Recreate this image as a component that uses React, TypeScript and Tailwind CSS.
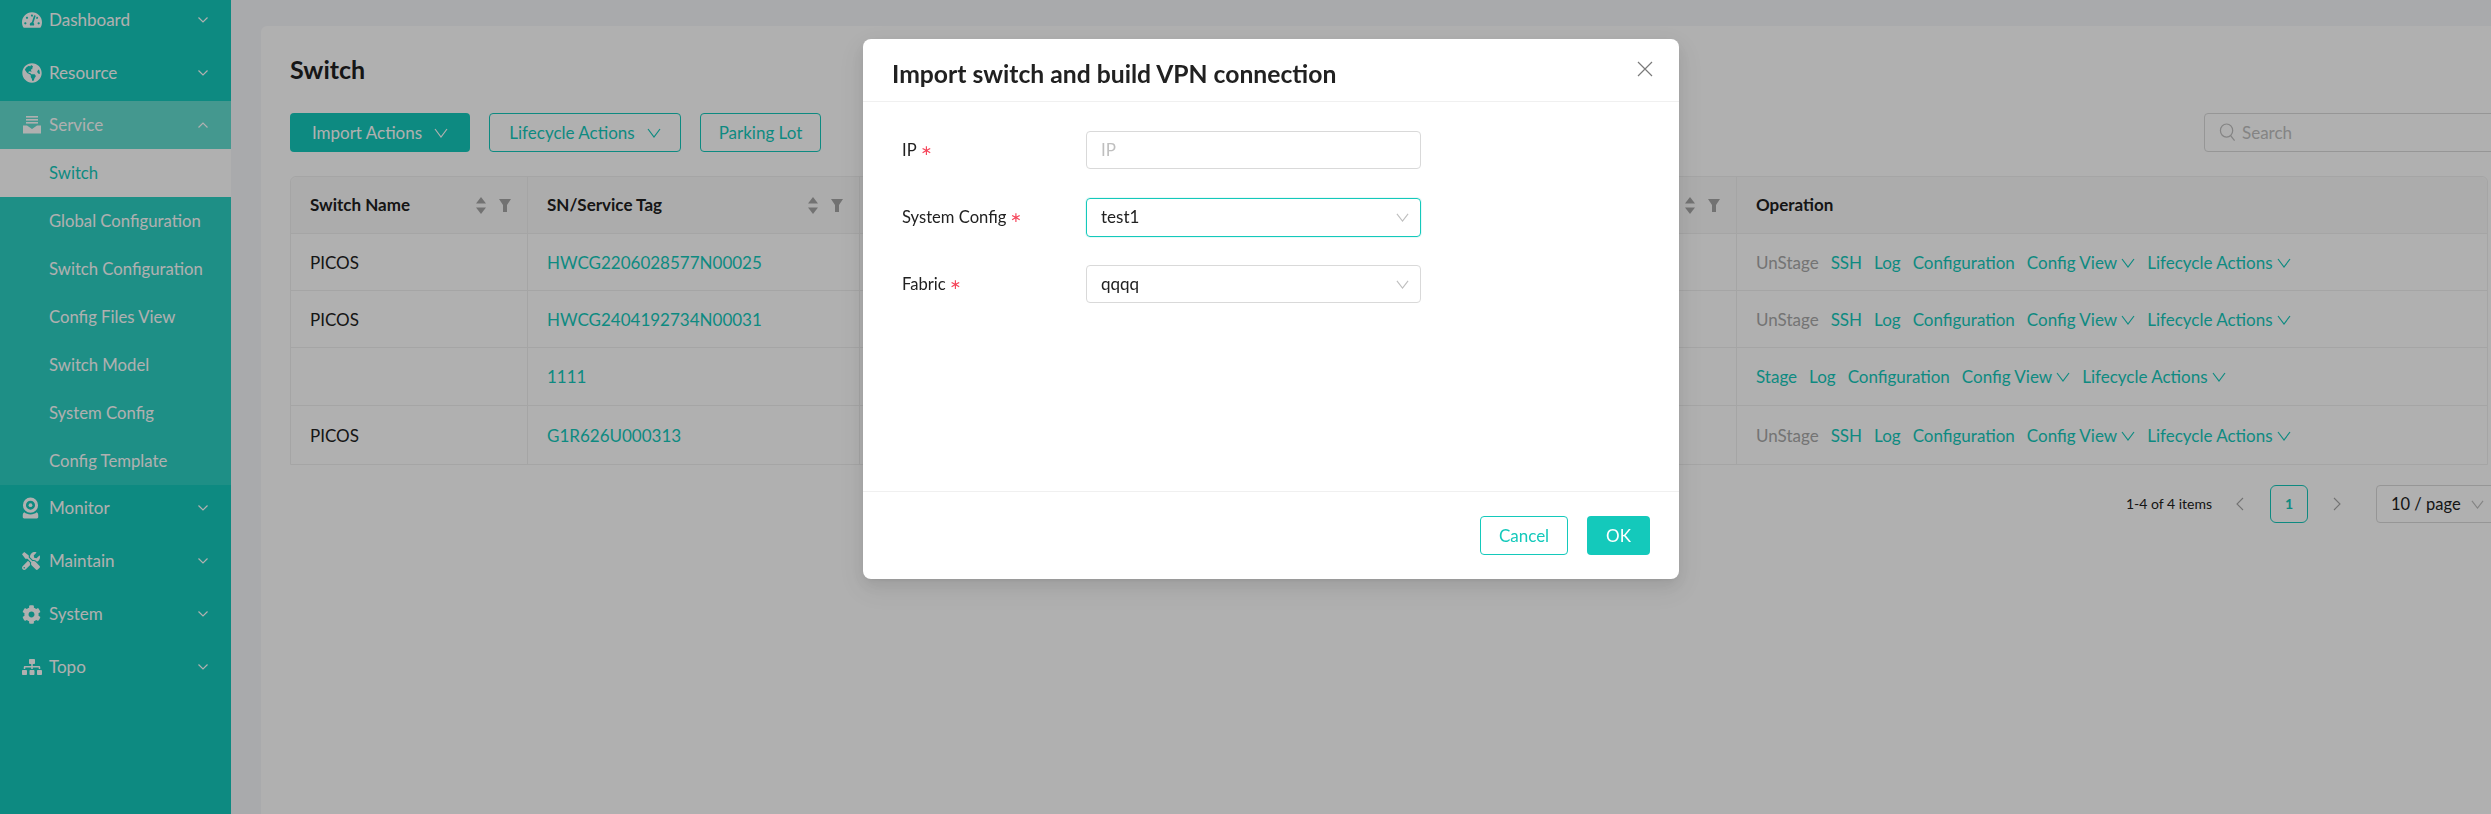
import { FaTachometerAlt, FaGlobeAmericas, FaTools, FaCog, FaSitemap } from 'react-icons/fa';

function Chevron({ className }: { className?: string }) {
  return (
    <svg viewBox="0 0 14 10" className={className} fill="none" stroke="currentColor" strokeWidth="1.2" preserveAspectRatio="none">
      <polyline points="1,1 7,9 13,1" />
    </svg>
  );
}

function MenuCaret({ up }: { up?: boolean }) {
  return (
    <svg viewBox="0 0 10 6" className="w-[10px] h-[6px] text-[#ffffff]" fill="none" stroke="currentColor" strokeWidth="1.2">
      <polyline points={up ? '0.5,5.5 5,1 9.5,5.5' : '0.5,0.5 5,5 9.5,0.5'} />
    </svg>
  );
}

function ServiceIcon() {
  return (
    <svg viewBox="0 0 20 18" className="w-5 h-[18px]" fill="currentColor">
      <rect x="4" y="0" width="12" height="1.6" />
      <rect x="4" y="3" width="12" height="1.6" />
      <rect x="4" y="6" width="12" height="1.6" />
      <path d="M1 9.5h4l5 3.5 5-3.5h4v1.2L19 17.5H1z" />
    </svg>
  );
}

function CamIcon() {
  return (
    <svg viewBox="0 0 18 22" className="w-[17px] h-[22px]" fill="currentColor">
      <path fillRule="evenodd" d="M9 0a8 8 0 1 1 0 16A8 8 0 0 1 9 0zm0 3.2a4.8 4.8 0 1 0 0 9.600A4.800 4.800 0 0 0 9 3.200z" />
      <circle cx="9" cy="8" r="2" />
      <path d="M2.500 15.500C4 17 6.500 17.800 9 17.800s5-.8 6.500-2.300c1 .5 1.700 1.500 1.700 3.500v1.500c0 .8-.6 1.500-1.500 1.500H2.300c-.9 0-1.500-.7-1.500-1.500V19c0-2 .7-3 1.700-3.500z" />
    </svg>
  );
}

function SortIcon() {
  return (
    <svg viewBox="0 0 10 17" className="w-[10px] h-[17px]" fill="currentColor">
      <path d="M5 0l5 6.500H0z" />
      <path d="M5 17l5-6.500H0z" />
    </svg>
  );
}

function FilterIcon() {
  return (
    <svg viewBox="0 0 12 13" className="w-3 h-[13px]" fill="currentColor">
      <path d="M0 0h12L8 6v7H4V6z" />
    </svg>
  );
}

function TopMenu({ icon, label, up, active }: { icon: React.ReactNode; label: string; up?: boolean; active?: boolean }) {
  return (
    <div className={`flex items-center h-12 pl-[22px] pr-[23px] text-white ${active ? 'bg-[#63dccf]' : ''}`}>
      <span className="w-[27px] flex items-center">{icon}</span>
      <span className="flex-1">{label}</span>
      <MenuCaret up={up} />
    </div>
  );
}

const subItems = ['Global Configuration', 'Switch Configuration', 'Config Files View', 'Switch Model', 'System Config', 'Config Template'];

function Sidebar() {
  return (
    <aside className="w-[231px] shrink-0 bg-[#14c9bb] -mt-1 flex flex-col">
      <div className="mb-[5px]">
        <TopMenu icon={<FaTachometerAlt className="w-5 h-5" />} label="Dashboard" />
      </div>
      <div className="mb-1">
        <TopMenu icon={<FaGlobeAmericas className="w-5 h-5" />} label="Resource" />
      </div>
      <TopMenu icon={<ServiceIcon />} label="Service" up active />
      <div className="bg-[#2cd0c3] text-[16.7px]">
        <div className="h-12 flex items-center pl-[49px] pt-px bg-white text-[#14c9bb]">Switch</div>
        {subItems.map((s) => (
          <div key={s} className="h-12 flex items-center pl-[49px] pt-px text-white">
            {s}
          </div>
        ))}
      </div>
      <div className="flex flex-col gap-[5px] -mt-px">
        <TopMenu icon={<CamIcon />} label="Monitor" />
        <TopMenu icon={<FaTools className="w-[18px] h-[18px]" />} label="Maintain" />
        <TopMenu icon={<FaCog className="w-[19px] h-[19px]" />} label="System" />
        <TopMenu icon={<FaSitemap className="w-5 h-5" />} label="Topo" />
      </div>
    </aside>
  );
}

function HeadCell({ label, tools, border = true }: { label: string; tools?: boolean; border?: boolean }) {
  return (
    <div className={`flex items-center pl-[19px] pr-4 ${border ? 'border-r border-[#efefef]' : ''}`}>
      <span className="flex-1 font-bold">{label}</span>
      {tools && (
        <span className="flex items-center gap-[13px] text-[#a6a6a6]">
          <SortIcon />
          <FilterIcon />
        </span>
      )}
    </div>
  );
}

function Ops({ stage }: { stage?: boolean }) {
  return (
    <div className="flex items-center gap-3 pl-[19px] pt-px text-[#14c9bb]">
      {stage ? (
        <span>Stage</span>
      ) : (
        <>
          <span className="text-[#a8a8a8]">UnStage</span>
          <span>SSH</span>
        </>
      )}
      <span>Log</span>
      <span>Configuration</span>
      <span className="flex items-center gap-1">
        Config View <Chevron className="w-[14px] h-[10px]" />
      </span>
      <span className="flex items-center gap-1">
        Lifecycle Actions <Chevron className="w-[14px] h-[10px]" />
      </span>
    </div>
  );
}

const rows = [
  { name: 'PICOS', sn: 'HWCG2206028577N00025', h: 'h-[57px]' },
  { name: 'PICOS', sn: 'HWCG2404192734N00031', h: 'h-[57px]' },
  { name: '', sn: '1111', h: 'h-[58px]', stage: true },
  { name: 'PICOS', sn: 'G1R626U000313', h: 'h-[58px]' },
];

function SwitchTable() {
  return (
    <div className="mt-[24px] w-[2198px] border border-[#efefef] rounded-t-md text-[#212121]">
      <div className="grid grid-cols-[237px_332px_877px_1fr] h-[57px] bg-[#fafafa] border-b border-[#efefef] rounded-t-md">
        <HeadCell label="Switch Name" tools />
        <HeadCell label="SN/Service Tag" tools />
        <HeadCell label="" tools />
        <HeadCell label="Operation" border={false} />
      </div>
      {rows.map((r) => (
        <div key={r.sn} className={`grid grid-cols-[237px_332px_877px_1fr] border-b border-[#efefef] last:border-b-0 ${r.h}`}>
          <div className="flex items-center pl-[19px] pt-px border-r border-[#efefef]">{r.name}</div>
          <div className="flex items-center pl-[19px] pt-px border-r border-[#efefef] text-[#14c9bb]">{r.sn}</div>
          <div className="border-r border-[#efefef]" />
          <Ops stage={r.stage} />
        </div>
      ))}
    </div>
  );
}

function Pagination() {
  return (
    <div className="flex items-center mt-5 ml-[1836px] w-[500px] h-[38px]">
      <span className="text-sm text-[#212121] w-[85px] whitespace-nowrap">1-4 of 4 items</span>
      <span className="ml-[24px] w-[10px] text-[#a6a6a6]">
        <svg viewBox="0 0 10 16" className="w-[10px] h-4" fill="none" stroke="currentColor" strokeWidth="1.1">
          <polyline points="8,2 2,8 8,14" />
        </svg>
      </span>
      <span className="ml-[25px] w-[38px] h-[38px] flex items-center justify-center rounded-md border border-[#14c9bb] text-[#14c9bb] text-sm font-bold">1</span>
      <span className="ml-[24px] w-[10px] text-[#a6a6a6]">
        <svg viewBox="0 0 10 16" className="w-[10px] h-4" fill="none" stroke="currentColor" strokeWidth="1.1">
          <polyline points="2,2 8,8 2,14" />
        </svg>
      </span>
      <div className="ml-[34px] w-[140px] h-[38px] flex items-center pl-[14px] border border-[#d9d9d9] rounded text-[#212121] text-[16.5px]">
        10 / page
        <Chevron className="ml-[10px] w-[13px] h-[9px] text-[#bfbfbf]" />
      </div>
    </div>
  );
}

function FormRow({ label, children }: { label: string; children: React.ReactNode }) {
  return (
    <div className="flex items-center h-[38px]">
      <div className="w-[194px] pl-[10px] text-[#212121] flex items-center gap-1">
        <span className="text-[16.6px]">{label}</span>
        <span className="text-[#f5455a] font-['DejaVu_Sans',sans-serif] text-sm">∗</span>
      </div>
      {children}
    </div>
  );
}

function Modal() {
  return (
    <div className="fixed inset-0 bg-black/[.31] pl-[863px] pt-[39px]">
      <div className="w-[816px] h-[540px] bg-white rounded-lg flex flex-col shadow-[0_6px_16px_0_rgba(0,0,0,0.08),0_3px_6px_-4px_rgba(0,0,0,0.12),0_9px_28px_8px_rgba(0,0,0,0.05)]">
        <div className="h-[63px] shrink-0 flex items-center justify-between pl-[29px] pr-[26px] border-b border-[#f0f0f0]">
          <span className="text-[24.7px] font-bold text-[#212121] mt-[7px]">Import switch and build VPN connection</span>
          <svg viewBox="0 0 16 16" className="w-4 h-4 text-[#7a7a7a] -mt-0.5" fill="none" stroke="currentColor" strokeWidth="1.2">
            <path d="M1 1l14 14M15 1L1 15" />
          </svg>
        </div>
        <div className="flex-1 pt-[29px] pl-[29px] flex flex-col gap-[29px]">
          <FormRow label="IP">
            <div className="w-[335px] h-[38px] flex items-center px-[14px] border border-[#d9d9d9] rounded text-[#bfbfbf]">IP</div>
          </FormRow>
          <FormRow label="System Config">
            <div className="w-[335px] h-[39px] flex items-center justify-between pl-[14px] pr-[11px] border border-[#14c9bb] rounded text-[#212121] shadow-[0_0_0_1px_rgba(20,201,187,0.1)]">
              test1
              <Chevron className="w-[13px] h-[9px] text-[#bfbfbf]" />
            </div>
          </FormRow>
          <FormRow label="Fabric">
            <div className="w-[335px] h-[38px] flex items-center justify-between pl-[14px] pr-[11px] border border-[#d9d9d9] rounded text-[#212121]">
              qqqq
              <Chevron className="w-[13px] h-[9px] text-[#bfbfbf]" />
            </div>
          </FormRow>
        </div>
        <div className="h-[88px] shrink-0 border-t border-[#f0f0f0] flex items-start justify-end gap-[19px] pt-[24px] pr-[29px]">
          <button className="w-[88px] h-[39px] rounded border border-[#14c9bb] text-[#14c9bb] bg-white">Cancel</button>
          <button className="w-[63px] h-[39px] rounded bg-[#14c9bb] text-white">OK</button>
        </div>
      </div>
    </div>
  );
}

export default function App() {
  return (
    <div className="relative h-[814px] w-[2491px] overflow-hidden flex bg-[#f5f6f9] text-[17px] font-['Lato',sans-serif]">
      <Sidebar />
      <main className="flex-1 min-w-0 pl-[30px] pt-[26px]">
        <div className="h-[788px] w-[2300px] bg-white rounded-tl-md pl-[29px] pt-[26px]">
          <h1 className="text-[25px] font-bold text-[#212121] leading-9 -mt-px">Switch</h1>
          <div className="flex items-center mt-[26px]">
            <button className="w-[180px] h-[39px] flex items-center justify-center gap-3 rounded bg-[#14c9bb] text-white">
              Import Actions <Chevron className="w-[14px] h-[10px]" />
            </button>
            <button className="ml-[19px] w-[192px] h-[39px] flex items-center justify-center gap-3 rounded border border-[#14c9bb] text-[#14c9bb]">
              Lifecycle Actions <Chevron className="w-[14px] h-[10px]" />
            </button>
            <button className="ml-[19px] w-[121px] h-[39px] rounded border border-[#14c9bb] text-[#14c9bb]">Parking Lot</button>
            <div className="ml-[1383px] w-[300px] h-[39px] shrink-0 flex items-center gap-[6px] pl-[14px] rounded border border-[#d9d9d9] text-[#bfbfbf]">
              <svg viewBox="0 0 18 20" className="w-[17px] h-[19px]" fill="none" stroke="currentColor" strokeWidth="1.3">
                <ellipse cx="8" cy="8" rx="6.500" ry="7" />
                <path d="M12.500 13.500l4 5" />
              </svg>
              Search
            </div>
          </div>
          <SwitchTable />
          <Pagination />
        </div>
      </main>
      <Modal />
    </div>
  );
}
